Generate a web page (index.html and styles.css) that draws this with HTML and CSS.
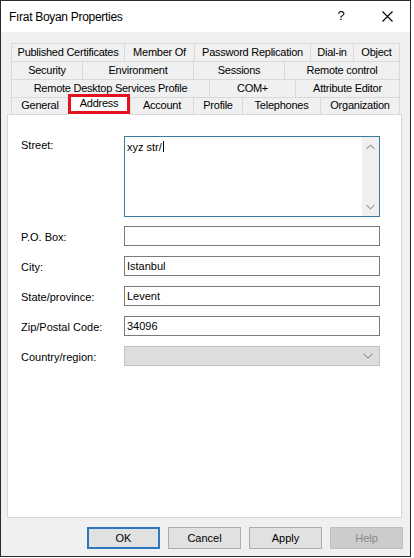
FILE: index.html
```html
<!DOCTYPE html>
<html>
<head>
<meta charset="utf-8">
<link rel="stylesheet" href="styles.css">
</head>
<body>
<div class="window">
  <div class="titlebar">
    <span class="title">Fırat Boyan Properties</span>
    <span class="tb-btn help-q">?</span>
    <span class="tb-btn close-x">
      <svg width="11" height="11" viewBox="0 0 11 11"><path d="M0.5 0.5 L10.5 10.5 M10.5 0.5 L0.5 10.5" stroke="#000" stroke-width="1.1" fill="none"/></svg>
    </span>
  </div>
  <div class="content">
    <div class="tabs">
      <div class="tabrow r1">
        <div class="tab">Published Certificates</div>
        <div class="tab">Member Of</div>
        <div class="tab">Password Replication</div>
        <div class="tab">Dial-in</div>
        <div class="tab">Object</div>
      </div>
      <div class="tabrow r2">
        <div class="tab">Security</div>
        <div class="tab">Environment</div>
        <div class="tab">Sessions</div>
        <div class="tab">Remote control</div>
      </div>
      <div class="tabrow r3">
        <div class="tab">Remote Desktop Services Profile</div>
        <div class="tab">COM+</div>
        <div class="tab">Attribute Editor</div>
      </div>
      <div class="tabrow r4">
        <div class="tab">General</div>
        <div class="tab selected">Address</div>
        <div class="tab">Account</div>
        <div class="tab">Profile</div>
        <div class="tab">Telephones</div>
        <div class="tab">Organization</div>
      </div>
    </div>
    <div class="panel">
      <div class="form">
        <div class="label label-top">Street:</div>
        <div class="textarea">
          <div class="ta-text">xyz str/<span class="caret"></span></div>
          <div class="vscroll">
            <svg width="9" height="6" viewBox="0 0 9 6"><path d="M0.5 5 L4.5 1 L8.5 5" stroke="#a6a6a6" stroke-width="1.2" fill="none"/></svg>
            <svg width="9" height="6" viewBox="0 0 9 6"><path d="M0.5 1 L4.5 5 L8.5 1" stroke="#a6a6a6" stroke-width="1.2" fill="none"/></svg>
          </div>
        </div>
        <div class="label">P.O. Box:</div>
        <div class="input"></div>
        <div class="label">City:</div>
        <div class="input">Istanbul</div>
        <div class="label">State/province:</div>
        <div class="input">Levent</div>
        <div class="label">Zip/Postal Code:</div>
        <div class="input">34096</div>
        <div class="label">Country/region:</div>
        <div class="combo">
          <svg width="10" height="6" viewBox="0 0 10 6"><path d="M0.5 0.8 L5 5 L9.5 0.8" stroke="#7a7a7a" stroke-width="1" fill="none"/></svg>
        </div>
      </div>
    </div>
    <div class="buttons">
      <div class="btn default">OK</div>
      <div class="btn">Cancel</div>
      <div class="btn">Apply</div>
      <div class="btn disabled">Help</div>
    </div>
  </div>
</div>
</body>
</html>
```
FILE: styles.css
```css
* { box-sizing: border-box; }
html, body { margin: 0; padding: 0; background: #ffffff; }
body {
  font-family: "Liberation Sans", Arial, sans-serif;
  font-size: 11px;
  color: #000;
}
.window {
  width: 411px;
  height: 557px;
  border: 1px solid #2b2b2b;
  display: flex;
  flex-direction: column;
  background: #f0f0f0;
}
.titlebar {
  height: 31px;
  background: #ffffff;
  display: flex;
  align-items: center;
  flex: none;
}
.title {
  flex: 1;
  padding-left: 8px;
  font-size: 12px;
  letter-spacing: -0.3px;
  padding-top: 1px;
}
.tb-btn {
  width: 46px;
  height: 31px;
  display: flex;
  align-items: center;
  justify-content: center;
}
.help-q {
  font-size: 13px;
  padding-bottom: 2px;
}
.close-x svg { display: block; }
.content {
  flex: 1;
  padding: 11px 8px 0 6px;
  display: flex;
  flex-direction: column;
}
.tabs {
  margin: 0 2px 0 4px;
  display: flex;
  flex-direction: column;
}
.tabrow {
  display: grid;
  height: 18px;
}
.tabrow.r4 { height: 17px; }
.r1 { grid-template-columns: 113px 70px 116px 43px 47px; }
.r2 { grid-template-columns: 71px 111px 91px 116px; }
.r3 { grid-template-columns: 198px 86px 105px; }
.r4 { grid-template-columns: 57px 62px 63px 49px 78px 80px; }
.tab {
  border-top: 1px solid #d9d9d9;
  border-left: 1px solid #d9d9d9;
  display: flex;
  align-items: center;
  justify-content: center;
  white-space: nowrap;
  letter-spacing: -0.25px;
  background: #f0f0f0;
  padding-bottom: 2px;
}
.tab:last-child { border-right: 1px solid #d9d9d9; }
.tab.selected {
  position: relative;
  z-index: 2;
  background: #ffffff;
  margin-top: -2px;
  margin-bottom: -1px;
  border-right: 1px solid #d9d9d9;
  padding-bottom: 5px;
}
.tab.selected::after {
  content: "";
  position: absolute;
  left: -1px;
  right: -1px;
  top: -2px;
  bottom: 1px;
  border: 3px solid #e2131f;
}
.panel {
  height: 404px;
  background: #ffffff;
  border: 1px solid #d9d9d9;
  flex: none;
}
.form {
  padding: 21px 0 0 13px;
  display: grid;
  grid-template-columns: 103px 256px;
  row-gap: 10px;
  align-items: center;
}
.label {
  padding-top: 2px;
  white-space: nowrap;
}
.label-top {
  align-self: start;
  padding-top: 3px;
}
.textarea {
  height: 81px;
  border: 1px solid #3b7a9c;
  display: flex;
  margin-bottom: -1px;
}
.ta-text {
  flex: 1;
  padding: 3px 0 0 2px;
  line-height: 15px;
}
.caret {
  display: inline-block;
  width: 1px;
  height: 11px;
  background: #000;
  vertical-align: -1px;
  margin-left: 1px;
}
.vscroll {
  width: 17px;
  background: #f0f0f0;
  display: flex;
  flex-direction: column;
  justify-content: space-between;
  align-items: center;
  padding: 7px 0 6px;
}
.vscroll svg { display: block; }
.input {
  height: 20px;
  border: 1px solid #7a7a7a;
  padding: 0 2px;
  line-height: 18px;
}
.combo {
  height: 20px;
  border: 1px solid #c2c2c2;
  background: #dedede;
  display: flex;
  align-items: center;
  justify-content: flex-end;
  padding-right: 6px;
}
.combo svg { display: block; }
.buttons {
  margin-top: 9px;
  display: flex;
  justify-content: flex-end;
  gap: 8px;
  margin-right: -1px;
}
.btn {
  width: 73px;
  height: 22px;
  background: #e1e1e1;
  border: 1px solid #adadad;
  display: flex;
  align-items: center;
  justify-content: center;
}
.btn.default {
  border: 2px solid #2a79be;
}
.btn.disabled {
  background: #cccccc;
  border-color: #bfbfbf;
  color: #8a8a8a;
}
```
